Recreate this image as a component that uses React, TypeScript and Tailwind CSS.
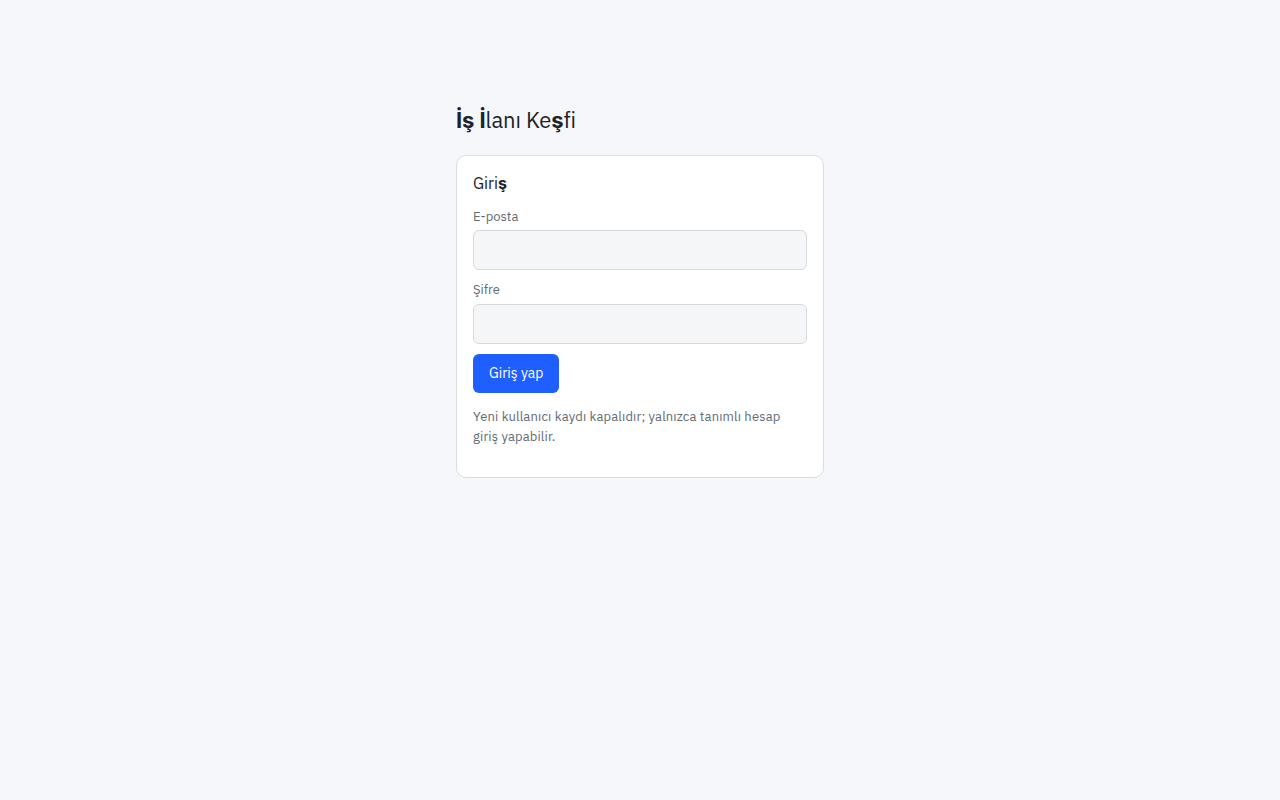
export default function App() {
  return (
    <div
      className="min-h-screen bg-[#f5f7fa] text-[#1f2328]"
      style={{ fontFamily: '"IBM Plex Sans", Inter, "Noto Sans", sans-serif' }}
    >
      <div className="mx-auto w-[368px] pt-[104px]">
        <h1 className="text-[22px] leading-[32px] mb-[19px] tracking-[-0.1px]">
          <span className="font-bold font-[Inter]">İş İ</span>lanı Ke<span className="font-bold font-[Inter]">ş</span>fi
        </h1>
        <div className="bg-white border border-[#d9dde3] rounded-[10px] px-4 pt-[15px] pb-[30px]">
          <h2 className="text-[16px] leading-[24px] mb-[13px]">
            Giri<span className="font-bold font-[Inter]">ş</span>
          </h2>
          <form onSubmit={(e) => e.preventDefault()}>
            <label className="block text-[13px] leading-[18px] text-[#626a75] mb-[4px]">E-posta</label>
            <input
              type="email"
              className="block w-full h-[40px] rounded-[6px] border border-[#d5d9e0] bg-[#f5f6f8] px-3 text-sm outline-none"
            />
            <label className="block text-[13px] leading-[18px] text-[#626a75] mt-[11px] mb-[5px]">Şifre</label>
            <input
              type="password"
              className="block w-full h-[40px] rounded-[6px] border border-[#d5d9e0] bg-[#f5f6f8] px-3 text-sm outline-none"
            />
            <button
              type="submit"
              className="mt-[10px] h-[39px] px-4 rounded-[6px] bg-[#1f5eff] text-white text-[14px]"
            >
              Giriş yap
            </button>
          </form>
          <p className="mt-[14px] text-[13px] leading-[20px] tracking-[0.15px] text-[#626a75]">
            Yeni kullanıcı kaydı kapalıdır; yalnızca tanımlı hesap giriş yapabilir.
          </p>
        </div>
      </div>
    </div>
  );
}
